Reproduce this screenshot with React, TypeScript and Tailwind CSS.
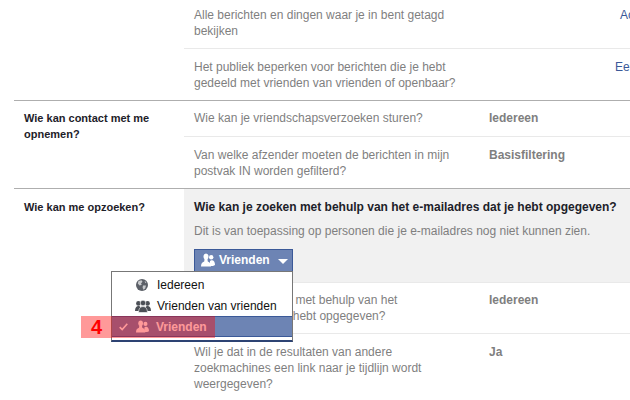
import React from 'react';

function FriendsIcon({ className }: { className: string }) {
  return (
    <svg viewBox="0 0 14 14" className={className} fill="currentColor">
      <circle cx="10.2" cy="4.2" r="2.2" />
      <path d="M9 13 L9 8 L10.2 7.2 L11.4 7.2 C13 7.8 14 9.2 14 12 L12 13 Z" />
      <ellipse cx="5" cy="3.6" rx="2.5" ry="3.1" />
      <path d="M0 13.5 C0 10.5 1 9.2 3.2 8.4 L3.6 6 H6.4 L6.8 8.4 C9 9.2 10 10.5 10 13.5 Z" />
    </svg>
  );
}

function GroupIcon() {
  return (
    <svg viewBox="0 0 16 14" className="w-[16px] h-[14px] text-[#4b4f56]" fill="currentColor">
      <circle cx="3.4" cy="4.4" r="2.3" />
      <circle cx="12.6" cy="4.4" r="2.3" />
      <path d="M0 12 C0 8.5 1.5 7 3.4 7 C5 7 6 8 6 12 Z" />
      <path d="M10 12 C10 8 11 7 12.6 7 C14.5 7 16 8.5 16 12 Z" />
      <circle cx="8" cy="4" r="2.8" stroke="#fff" strokeWidth="0.6" />
      <path d="M3.6 13.5 C3.6 9.5 5.5 7.6 8 7.6 C10.5 7.6 12.4 9.5 12.4 13.5 Z" stroke="#fff" strokeWidth="0.6" />
    </svg>
  );
}

function GlobeIcon() {
  return (
    <svg viewBox="0 0 12 12" className="w-[12px] h-[12px]">
      <circle cx="6" cy="6" r="6" fill="#5c6068" />
      <path d="M2.5 2 L5.5 1.2 L6.5 2.8 L5 4.4 L5.8 5.8 L3.6 6.6 L1.8 4.6 Z" fill="#c9cbce" />
      <path d="M7 6.4 L10 6.6 L9.2 9.6 L7.4 10.8 L6.6 8.4 Z" fill="#c9cbce" />
      <path d="M8.6 2 L10.4 3.2 L9.4 4.2 Z" fill="#c9cbce" />
    </svg>
  );
}

function Row({ children, value, border = true, first = false, tall = false }: { children: React.ReactNode; value?: React.ReactNode; border?: boolean; first?: boolean; tall?: boolean }) {
  return (
    <div className={`flex pl-[10px] ${border ? 'border-t border-[#e9e9e9] pt-[10px]' : first ? 'pt-[7px]' : 'pt-[9px]'} ${tall ? 'pb-[10px]' : 'pb-[9px]'}`}>
      <div className="w-[295px] shrink-0 text-[#7f7f7f] pr-[30px]">{children}</div>
      {value}
    </div>
  );
}

const Value = ({ text }: { text: string }) => <div className="font-bold text-[#7f7f7f] whitespace-nowrap">{text}</div>;

export default function App() {
  return (
    <div className="relative w-[630px] h-[400px] overflow-hidden bg-white pl-[14px] text-[12px] leading-[16px] font-['Liberation_Sans',Arial,sans-serif]">
      {/* eerste groep, zonder label */}
      <div className="flex h-[101px] border-b border-[#aeaeae]">
        <div className="w-[170px] shrink-0" />
        <div className="flex-1 min-w-0">
          <Row first border={false} value={<div className="ml-[131px] text-[#3b5998] whitespace-nowrap">Ac</div>}>
            Alle berichten en dingen waar je in bent getagd bekijken
          </Row>
          <Row value={<div className="ml-[126px] text-[#3b5998] whitespace-nowrap">Een</div>}>
            Het publiek beperken voor berichten die je hebt gedeeld met vrienden van vrienden of openbaar?
          </Row>
        </div>
      </div>

      {/* contact */}
      <div className="flex h-[88px] border-b border-[#aeaeae]">
        <div className="w-[170px] shrink-0 pl-[10px] pt-[9px] pr-[10px] font-bold text-[11px] leading-[16px] text-[#1d2129]">
          Wie kan contact met me opnemen?
        </div>
        <div className="flex-1 min-w-0">
          <Row border={false} tall value={<Value text="Iedereen" />}>Wie kan je vriendschapsverzoeken sturen?</Row>
          <Row value={<Value text="Basisfiltering" />}>
            Van welke afzender moeten de berichten in mijn postvak IN worden gefilterd?
          </Row>
        </div>
      </div>

      {/* opzoeken */}
      <div className="flex">
        <div className="w-[170px] shrink-0 pl-[10px] pt-[10px] font-bold text-[11px] leading-[16px] text-[#1d2129]">
          Wie kan me opzoeken?
        </div>
        <div className="flex-1 min-w-0">
          <div className="h-[94px] bg-[#f1f1f1] border-b border-[#e9e9e9] pl-[10px] pt-[10px]">
            <div className="font-bold text-[12px] leading-[17px] text-[#1d2129] whitespace-nowrap">
              Wie kan je zoeken met behulp van het e-mailadres dat je hebt opgegeven?
            </div>
            <div className="mt-[7px] text-[#7f7f7f] whitespace-nowrap">
              Dit is van toepassing op personen die je e-mailadres nog niet kunnen zien.
            </div>
            <div className="mt-[10px] flex items-center w-[99px] h-[22px] pb-[2px] bg-[#6d84b4] border-t border-x border-[#3b5998] pl-[6px] text-white font-bold">
              <FriendsIcon className="w-[14px] h-[14px] text-white" />
              <span className="ml-[4px]">Vrienden</span>
              <span className="ml-[8px] mt-[3px] border-x-[5px] border-x-transparent border-t-[5px] border-t-white" />
            </div>
          </div>
          <Row border={false} value={<Value text="Iedereen" />}>
            Wie kan je zoeken met behulp van het<br />e-mailadres dat je hebt opgegeven?
          </Row>
          <Row value={<Value text="Ja" />}>
            Wil je dat in de resultaten van andere zoekmachines een link naar je tijdlijn wordt weergegeven?
          </Row>
        </div>
      </div>

      {/* dropdown menu */}
      <div className="absolute left-[111px] top-[271px] w-[182px] bg-white border border-[#777] border-b-2 border-b-[#2d4373] pt-[2px] pb-[3px]">
        <div className="flex items-center h-[21px] text-[#111] text-[12px]">
          <div className="w-[24px] ml-[24px]"><GlobeIcon /></div>
          <span className="ml-[-3px]">Iedereen</span>
        </div>
        <div className="flex items-center h-[21px] text-[#111] text-[12px]">
          <div className="w-[21px] ml-[23px]"><GroupIcon /></div>
          <span className="ml-[1px]">Vrienden van vrienden</span>
        </div>
        <div className="flex items-center h-[21px] bg-[#6d84b4] border-y border-[#3b5998] text-white font-bold">
          <svg viewBox="0 0 9 8" className="ml-[7px] mr-[8px] w-[9px] h-[8px]" fill="none" stroke="currentColor" strokeWidth="1.6">
            <path d="M0.7 4.2 L3.2 6.6 L8.3 0.8" />
          </svg>
          <FriendsIcon className="w-[13px] h-[13px] text-white" />
          <span className="ml-[7px]">Vrienden</span>
        </div>
      </div>

      {/* markering stap 4 */}
      <div className="absolute left-[81px] top-[316px] w-[134px] h-[22px] bg-[rgba(255,0,0,0.4)] flex items-center pl-[10px]">
        <span className="text-[red] font-bold text-[20px] leading-none">4</span>
      </div>
    </div>
  );
}
